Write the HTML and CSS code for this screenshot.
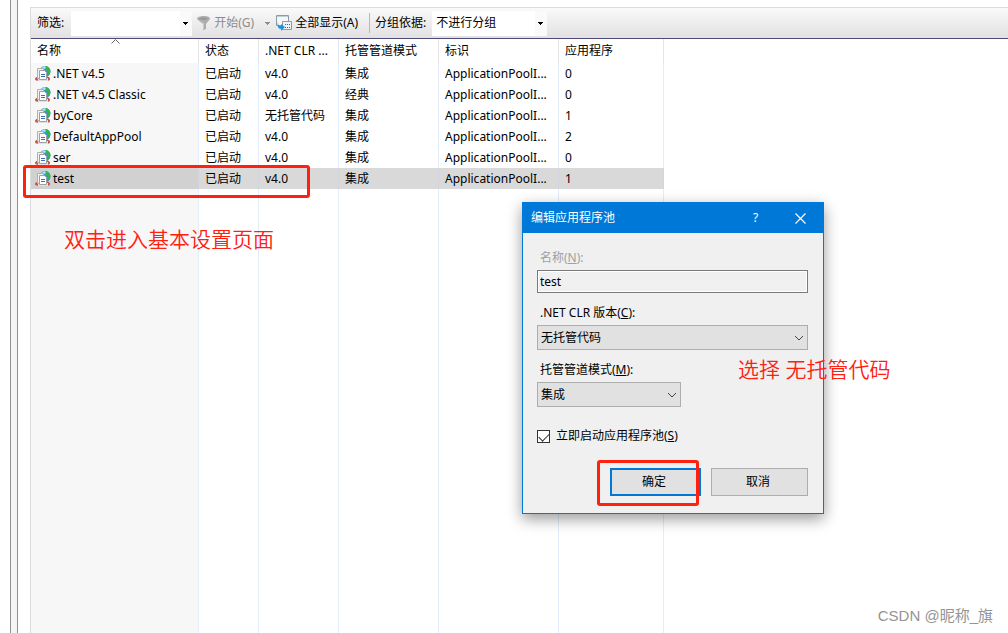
FILE: index.html
```
<!DOCTYPE html>
<html lang="zh-CN">
<head>
    <meta charset="UTF-8">
    <meta name="viewport" content="width=device-width, initial-scale=1.0">
    <title>应用程序池</title>
    <link rel="stylesheet" href="styles.css">
</head>
<body>
    <!-- 图标定义 -->
    <svg class="defs" width="0" height="0">
        <symbol id="pool" viewBox="0 0 16 16">
            <circle cx="10" cy="5.500" r="5.500" fill="#3a8fe0"/>
            <path d="M10 0c3 0 5 2 5.500 5l-1 4-2-1V5l-2-2z" fill="#35b548"/>
            <path d="M6 2l4-2 1 2-3 2z" fill="#a5e3f5"/>
            <path d="M0 13c0-2 3-3 8-3s7 1 7 3-3 2-7 2-8 0-8-2z" fill="#c4564c"/>
            <path d="M3 12h10v3H3z" fill="#e2e2e2"/>
            <path d="M2.500 2.500h6v10h-6z" fill="#f2f2f2" stroke="#b0b0b0"/>
            <path d="M4.500 4.500h5l2 2v7h-7z" fill="#fff" stroke="#a0a0a0"/>
            <path d="M6 8.500h4M6 10.500h4" stroke="#3f6fb5"/>
        </symbol>
        <symbol id="caret" viewBox="0 0 5 3">
            <path d="M0 0h5v1H4v1H3v1H2V2H1V1H0z" fill="currentColor"/>
        </symbol>
        <symbol id="chevron" viewBox="0 0 10 6">
            <path d="M1 1l4 4 4-4" fill="none" stroke="#444"/>
        </symbol>
    </svg>
    <div class="window">
        <div class="splitter"></div>
        <div class="panel">
            <div class="toolbar">
                <label for="filter">筛选:</label>
                <div class="combo combo-filter">
                    <input type="text" id="filter">
                    <svg width="5" height="3"><use href="#caret"/></svg>
                </div>
                <button type="button" class="tool" disabled>
                    <svg width="16" height="16" viewBox="0 0 16 16">
                        <path d="M1 4c0-2 3-3 7-3s6 1 6 3l-4 5v5l-3 1V9z" fill="#adadad"/>
                        <path d="M3 4c2-2 7-2 9 0-2 1-7 1-9 0z" fill="#959595"/>
                        <path d="M3 6l4 3v5l1 0V8z" fill="#c9c9c9"/>
                    </svg>
                    <span>开始(G)</span>
                    <svg class="split" width="5" height="3"><use href="#caret"/></svg>
                </button>
                <button type="button" class="tool tool-all">
                    <svg width="16" height="16" viewBox="0 0 16 16">
                        <path d="M.5.500h12v10H.5z" fill="#f4f7fa" stroke="#8a9aa8"/>
                        <path d="M1 1h11v1H1z" fill="#c3ccd4"/>
                        <path d="M6.500 6.500h9v8h-9z" fill="#eef3f8" stroke="#8a9aa8"/>
                        <path d="M9 9h1v1H9zm2 0h1v1h-1zm2 0h1v1h-1zM9 12h1v1H9zm2 0h1v1h-1zm2 0h1v1h-1z" fill="#4a6080"/>
                        <path d="M2 7c0 4 1 4 3 4V9l4 3-4 4v-2c-3 0-4-3-3-7z" fill="#1c94d8"/>
                    </svg>
                    <span>全部显示(A)</span>
                </button>
                <div class="divider"></div>
                <label for="group">分组依据:</label>
                <div class="combo combo-group">
                    <select id="group"><option>不进行分组</option></select>
                    <svg width="5" height="3"><use href="#caret"/></svg>
                </div>
            </div>
            <table class="pools">
                <colgroup>
                    <col class="c-name"><col class="c-state"><col class="c-clr"><col class="c-mode"><col class="c-id"><col class="c-app"><col>
                </colgroup>
                <thead>
                    <tr>
                        <th class="sorted">名称<svg width="9" height="5" viewBox="0 0 9 5"><path d="M.5 4.500l4-4 4 4" fill="none" stroke="#666"/></svg></th>
                        <th>状态</th><th>.NET CLR ...</th><th>托管管道模式</th><th>标识</th><th>应用程序</th><td></td>
                    </tr>
                </thead>
                <tbody>
                    <tr><td><svg width="16" height="16"><use href="#pool"/></svg>.NET v4.5</td><td>已启动</td><td>v4.0</td><td>集成</td><td>ApplicationPoolI...</td><td>0</td><td></td></tr>
                    <tr><td><svg width="16" height="16"><use href="#pool"/></svg>.NET v4.5 Classic</td><td>已启动</td><td>v4.0</td><td>经典</td><td>ApplicationPoolI...</td><td>0</td><td></td></tr>
                    <tr><td><svg width="16" height="16"><use href="#pool"/></svg>byCore</td><td>已启动</td><td>无托管代码</td><td>集成</td><td>ApplicationPoolI...</td><td>1</td><td></td></tr>
                    <tr><td><svg width="16" height="16"><use href="#pool"/></svg>DefaultAppPool</td><td>已启动</td><td>v4.0</td><td>集成</td><td>ApplicationPoolI...</td><td>2</td><td></td></tr>
                    <tr><td><svg width="16" height="16"><use href="#pool"/></svg>ser</td><td>已启动</td><td>v4.0</td><td>集成</td><td>ApplicationPoolI...</td><td>0</td><td></td></tr>
                    <tr class="selected"><td><svg width="16" height="16"><use href="#pool"/></svg>test</td><td>已启动</td><td>v4.0</td><td>集成</td><td>ApplicationPoolI...</td><td>1</td><td></td></tr>
                    <tr class="rest"><td></td><td></td><td></td><td></td><td></td><td></td><td></td></tr>
                </tbody>
            </table>
        </div>
    </div>

    <form class="dialog">
        <div class="titlebar">
            <span class="title">编辑应用程序池</span>
            <button type="button" class="help">?</button>
            <button type="button" class="close" aria-label="关闭">
                <svg width="11" height="11" viewBox="0 0 11 11"><path d="M.5.500l10 10M10.500.500l-10 10" stroke="#fff" stroke-width="1.200"/></svg>
            </button>
        </div>
        <div class="fields">
            <label for="name" class="off">名称(<u>N</u>):</label>
            <input type="text" id="name" value="test" readonly>
            <label for="clr">.NET CLR 版本(<u>C</u>):</label>
            <div class="drop">
                <select id="clr"><option>无托管代码</option></select>
                <svg width="10" height="6"><use href="#chevron"/></svg>
            </div>
            <label for="mode">托管管道模式(<u>M</u>):</label>
            <div class="drop drop-short">
                <select id="mode"><option>集成</option></select>
                <svg width="10" height="6"><use href="#chevron"/></svg>
            </div>
            <div class="check">
                <input type="checkbox" id="start" checked>
                <label for="start">立即启动应用程序池(<u>S</u>)</label>
            </div>
            <div class="buttons">
                <button type="button" class="ok">确定</button>
                <button type="button">取消</button>
            </div>
        </div>
    </form>

    <!-- 标注 -->
    <div class="mark mark-row"></div>
    <div class="mark mark-ok"></div>
    <div class="note note-row">双击进入基本设置页面</div>
    <div class="note note-clr">选择 无托管代码</div>
    <div class="watermark">CSDN @昵称_旗</div>
</body>
</html>
```
FILE: styles.css
```
*{
    box-sizing: border-box;
}
body{
    position: relative;
    margin: 0;
    min-height: 100vh;
    background: #fff;
    color: #000;
    font: 12px/16px "Noto Sans", "Noto Sans CJK SC", sans-serif;
    overflow: hidden;
}
input, select, button{
    margin: 0;
    font: inherit;
    color: inherit;
    border-radius: 0;
}
select{
    appearance: none;
}
svg{
    flex: none;
}
.defs{
    position: absolute;
}
.window{
    display: flex;
    height: 100vh;
}
/* 左侧分隔条 */
.splitter{
    flex: none;
    width: 8px;
    margin: 0 12px 0 10px;
    border: solid #919191;
    border-width: 0 1px;
    background: #f5f5f5;
}
.panel{
    flex: 1;
    display: flex;
    flex-direction: column;
    margin-top: 7px;
    border-left: 1px solid #dcdcdc;
    border-top: 1px solid #dcdcdc;
}
/* 工具栏 */
.toolbar{
    flex: none;
    display: flex;
    align-items: center;
    height: 31px;
    padding-left: 6px;
    border-bottom: 1px solid #4b4b73;
    background: linear-gradient(#fafafa, #e2e0e2);
    white-space: nowrap;
}
.combo{
    position: relative;
    height: 25px;
}
.combo input, .combo select{
    width: 100%;
    height: 25px;
    padding: 0 4px;
    border: 0;
    border-right: 12px solid #fafafa;
    background: #fff;
    outline: none;
}
.combo svg{
    position: absolute;
    right: 4px;
    top: 11px;
}
.combo-filter{
    width: 121px;
    margin-left: 7px;
}
.combo-group{
    width: 115px;
    margin-left: 6px;
}
.tool{
    display: flex;
    align-items: center;
    gap: 2px;
    padding: 0;
    margin-left: 4px;
    border: 0;
    background: none;
}
.tool:disabled{
    color: #8c8c8c;
}
.tool-all{
    gap: 3px;
    margin-left: 6px;
}
.split{
    margin-left: 9px;
}
.divider{
    width: 1px;
    height: 20px;
    margin: 0 5px 0 11px;
    background: #bdbd9c;
}
/* 列表 */
.pools{
    flex: 1;
    width: 100%;
    height: 100%;
    table-layout: fixed;
    border-collapse: separate;
    border-spacing: 0;
    white-space: nowrap;
}
.c-name{ width: 168px; }
.c-state{ width: 60px; }
.c-clr{ width: 80px; }
.c-mode{ width: 100px; }
.c-id{ width: 120px; }
.c-app{ width: 105px; }
.pools th, .pools td{
    padding: 0 0 0 6px;
    border-right: 1px solid #e4edfa;
    text-align: left;
    font-weight: normal;
    overflow: hidden;
}
.pools td:last-child{
    border: 0;
}
.pools th{
    height: 24px;
    border-color: #e5e5e5;
}
.pools tbody td{
    height: 21px;
}
.pools tbody td:first-child{
    padding-left: 4px;
    background: #f7f7f7;
}
.pools td svg{
    margin-right: 2px;
    vertical-align: top;
}
.pools .rest td{
    height: auto;
}
.pools .selected td:not(:last-child){
    background: #d9d9d9;
    border-color: #d2d6dc;
}
.pools .selected td:first-child{
    background: #d1d1d1;
}
.sorted{
    position: relative;
}
.sorted svg{
    position: absolute;
    left: 80px;
    top: 0;
}
/* 对话框 */
.dialog{
    position: absolute;
    left: 522px;
    top: 202px;
    width: 302px;
    border: 1px solid #0078d7;
    background: #f0f0f0;
    box-shadow: 0 5px 14px rgba(0, 0, 0, 0.4);
}
.titlebar{
    display: flex;
    align-items: center;
    height: 30px;
    padding-left: 8px;
    background: #0078d7;
    color: #fff;
}
.title{
    flex: 1;
}
.titlebar button{
    display: flex;
    align-items: center;
    justify-content: center;
    width: 45px;
    height: 28px;
    padding: 0;
    border: 0;
    background: none;
}
.fields{
    display: flex;
    flex-direction: column;
    padding: 17px 15px 17px 14px;
}
.fields > label{
    margin-bottom: 4px;
    padding-left: 3px;
}
.off{
    color: #a0a0a0;
}
.fields > input{
    height: 23px;
    margin-bottom: 12px;
    padding: 0 2px;
    border: 1px solid #7a7a7a;
    background: #f0f0f0;
    box-shadow: inset 0 0 0 1px #fff;
    outline: none;
}
.drop{
    position: relative;
    height: 25px;
    margin-bottom: 12px;
}
.drop select{
    width: 100%;
    height: 25px;
    padding: 0 3px;
    border: 1px solid #adadad;
    background: #e1e1e1;
}
.drop svg{
    position: absolute;
    right: 4px;
    top: 10px;
}
.drop-short{
    width: 144px;
}
.check{
    display: flex;
    align-items: center;
    gap: 6px;
    margin: 9px 0 24px;
}
.check input{
    appearance: none;
    width: 13px;
    height: 13px;
    border: 1px solid #333;
    background: #fff;
}
.check input:checked::before{
    content: "";
    display: block;
    width: 9px;
    height: 5px;
    margin: 2px 0 0 1px;
    border: solid #333;
    border-width: 0 0 1px 1px;
    transform: rotate(-45deg);
}
.buttons{
    display: flex;
    justify-content: flex-end;
    gap: 10px;
}
.buttons button{
    width: 97px;
    height: 28px;
    padding: 0 3px 0 0;
    border: 1px solid #adadad;
    background: #e1e1e1;
}
.buttons .ok{
    width: 91px;
    border: 2px solid #0078d7;
}
/* 红色标注 */
.mark{
    position: absolute;
    border: 3px solid #ff2010;
    border-radius: 3px;
    pointer-events: none;
}
.mark-row{
    left: 23px;
    top: 165px;
    width: 287px;
    height: 33px;
}
.mark-ok{
    left: 597px;
    top: 460px;
    width: 102px;
    height: 46px;
}
.note{
    position: absolute;
    color: #ff2010;
    font-size: 21px;
    font-weight: 350;
    line-height: 28px;
    white-space: nowrap;
}
.note-row{
    left: 64px;
    top: 225px;
}
.note-clr{
    left: 738px;
    top: 355px;
}
.watermark{
    position: absolute;
    right: 15px;
    bottom: 6px;
    color: #949494;
    font-family: "Liberation Sans", "Noto Sans CJK SC", sans-serif;
    font-size: 15px;
    line-height: 22px;
}
```
